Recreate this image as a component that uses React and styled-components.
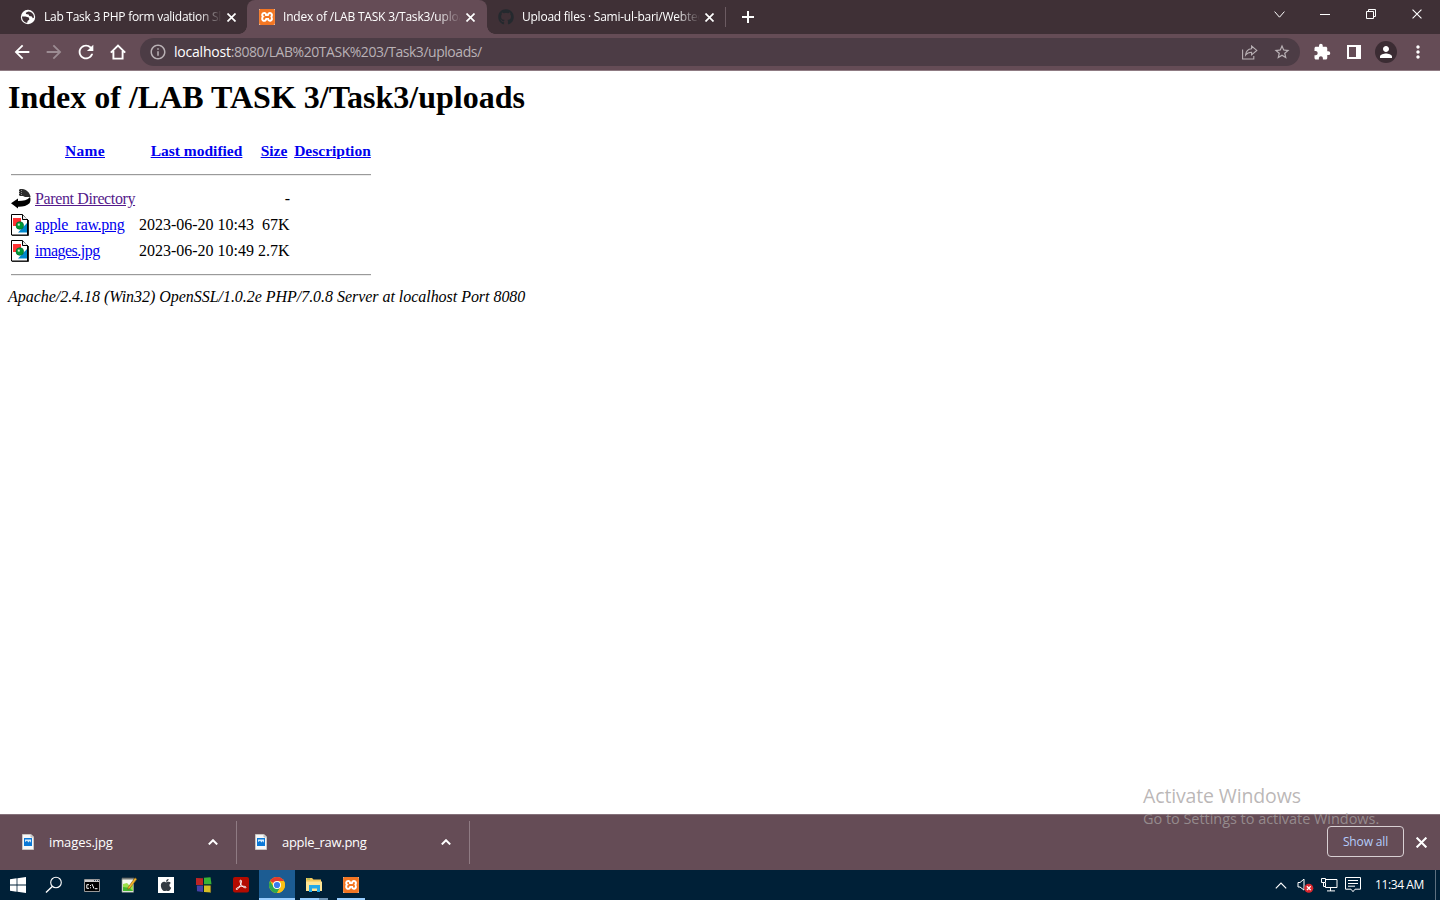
import React from 'react';
import styled, { createGlobalStyle } from 'styled-components';
import { MdArrowBack, MdArrowForward, MdRefresh, MdInfoOutline, MdStarBorder, MdExtension, MdPerson, MdMoreVert } from 'react-icons/md';
import { FaGithub, FaApple } from 'react-icons/fa';
import { SiXampp } from 'react-icons/si';

const Global = createGlobalStyle`
  * { box-sizing: border-box; }
  html, body { margin: 0; padding: 0; }
  body { width: 1440px; height: 900px; overflow: hidden; background: #fff; }
  svg { display: block; flex: none; }
`;

const Screen = styled.div`
  position: relative;
  width: 1440px;
  height: 900px;
  display: flex;
  flex-direction: column;
  font-family: 'Open Sans', 'Noto Sans', sans-serif;
  color: #fff;
`;

/* tab strip */
const TabStrip = styled.div`
  height: 34px;
  flex: none;
  display: flex;
  background: #3f3036;
  padding-left: 8px;
`;
const Tab = styled.div`
  position: relative;
  width: ${p => p.$width}px;
  height: 34px;
  display: flex;
  align-items: center;
  padding: 0 0 0 ${p => p.$left || 12}px;
  background: ${p => (p.$active ? '#654c56' : 'transparent')};
  border-radius: 8px 8px 0 0;
  &::before, &::after {
    content: '';
    display: ${p => (p.$active ? 'block' : 'none')};
    position: absolute;
    bottom: 0;
    width: 8px;
    height: 8px;
  }
  &::before { left: -8px; background: radial-gradient(circle at 0 0, transparent 7.5px, #654c56 8px); }
  &::after { right: -8px; background: radial-gradient(circle at 100% 0, transparent 7.5px, #654c56 8px); }
`;
const TabTitle = styled.div`
  width: 178px;
  margin: 0 5px 0 8px;
  overflow: hidden;
  white-space: nowrap;
  font-size: 12px;
  line-height: 16px;
  letter-spacing: ${p => p.$ls}px;
  mask-image: linear-gradient(90deg, #000 154px, transparent 178px);
`;
const TabDivider = styled.div`
  width: 1px;
  height: 20px;
  margin: 7px 16px 0 0;
  background: #6c5b62;
`;
const NewTab = styled.div`
  height: 34px;
  display: flex;
  align-items: center;
`;
const WindowButtons = styled.div`
  display: flex;
  height: 28px;
  margin-left: auto;
`;
const WindowButton = styled.div`
  width: 46px;
  display: flex;
  align-items: center;
  justify-content: center;
`;

/* toolbar */
const Toolbar = styled.div`
  height: 37px;
  flex: none;
  display: flex;
  align-items: center;
  background: #654c56;
  border-bottom: 1px solid #8f7b83;
  padding-left: 6px;
`;
const ToolButton = styled.div`
  width: 32px;
  height: 32px;
  display: flex;
  align-items: center;
  justify-content: center;
  color: ${p => (p.$dim ? '#9c8c93' : '#fff')};
`;
const Omnibox = styled.div`
  width: 1160px;
  height: 28px;
  margin: 0 6px;
  padding: 0 2px 0 9px;
  border-radius: 14px;
  background: #4c3c45;
  color: #b9b1b5;
  display: flex;
  align-items: center;
`;
const Url = styled.div`
  flex: 1;
  margin-left: 7px;
  font-size: 14px;
  line-height: 20px;
  white-space: nowrap;
  letter-spacing: -0.46px;
`;
const Host = styled.span`
  color: #fff;
  letter-spacing: -0.22px;
`;
const Avatar = styled.div`
  width: 22px;
  height: 22px;
  border-radius: 50%;
  background: #3b2c33;
  display: flex;
  align-items: center;
  justify-content: center;
`;

/* directory listing */
const Page = styled.main`
  height: 743px;
  flex: none;
  background: #fff;
  color: #000;
  padding: 8px;
  font-family: 'Liberation Serif', serif;
  font-size: 16px;
`;
const Heading = styled.h1`
  margin: 0 0 25px;
  font-size: 32px;
  line-height: 37px;
  font-weight: 700;
  white-space: nowrap;
`;
const Listing = styled.div`
  width: 360px;
  margin-left: 3px;
`;
const Row = styled.div`
  height: ${p => p.$height || 26}px;
  display: grid;
  grid-template-columns: 20px 100px 115px 32px 77px;
  column-gap: 4px;
  align-items: center;
  white-space: nowrap;
  font-size: ${p => (p.$head ? 15.5 : 16)}px;
  font-weight: ${p => (p.$head ? 700 : 400)};
`;
const HeadLink = styled.a`
  grid-column: ${p => p.$col};
  justify-self: center;
  color: #0000ee;
  text-decoration: underline;
  letter-spacing: ${p => p.$ls || 0}px;
`;
const FileLink = styled.a`
  color: ${p => (p.$visited ? '#551a8b' : '#0000ee')};
  text-decoration: underline;
  letter-spacing: ${p => p.$ls || 0}px;
`;
const Cell = styled.span`
  justify-self: end;
  padding-right: ${p => p.$inset || 0}px;
`;
const Rule = styled.div`
  height: 2px;
  border-top: 1px solid #9a9a9a;
  border-bottom: 1px solid #ececec;
  margin: ${p => p.$margin};
`;
const Signature = styled.address`
  line-height: 18px;
  font-style: italic;
  white-space: nowrap;
  letter-spacing: -0.035px;
`;

/* downloads */
const Shelf = styled.div`
  height: 56px;
  flex: none;
  display: flex;
  align-items: center;
  background: #654c56;
  border-top: 1px solid #85717a;
`;
const Download = styled.div`
  width: ${p => p.$width}px;
  height: 43px;
  display: flex;
  align-items: center;
  padding: 0 18px 2px ${p => p.$left}px;
  border-right: 1px solid #8f7b83;
`;
const FileName = styled.div`
  flex: 1;
  margin-left: 15px;
  font-size: 13px;
  line-height: 18px;
  letter-spacing: ${p => p.$ls}px;
`;
const ShowAll = styled.div`
  width: 77px;
  height: 31px;
  margin: 0 12px 2px auto;
  border: 1px solid #d8d0d3;
  border-radius: 4px;
  color: #b4cdfb;
  font-size: 12px;
  line-height: 29px;
  text-align: center;
  letter-spacing: -0.15px;
`;
const ShelfClose = styled.div`
  width: 24px;
`;

/* taskbar */
const Taskbar = styled.div`
  height: 30px;
  flex: none;
  display: flex;
  align-items: center;
  background: #002037;
`;
const TaskItem = styled.div`
  position: relative;
  width: ${p => p.$width || 37}px;
  height: 30px;
  display: flex;
  align-items: center;
  justify-content: center;
  background: ${p => (p.$active ? '#1c5c92' : 'transparent')};
`;
const Running = styled.i`
  position: absolute;
  bottom: 0;
  left: ${p => p.$left}px;
  width: ${p => p.$width}px;
  height: 2px;
  background: ${p => p.$color || '#99ceff'};
`;
const AppTile = styled.div`
  width: 16px;
  height: 16px;
  display: flex;
  align-items: center;
  justify-content: center;
  background: #fff;
  color: ${p => p.$color};
  border-radius: ${p => p.$radius || 0}px;
  overflow: hidden;
`;
const Tray = styled.div`
  display: flex;
  align-items: center;
  height: 30px;
  margin-left: auto;
`;
const TrayIcons = styled.div`
  display: flex;
  align-items: center;
  gap: 7px;
  margin-left: 10px;
`;
const Clock = styled.div`
  width: 50px;
  margin: 0 10px 1px 14px;
  font-size: 12px;
  line-height: 16px;
  white-space: nowrap;
  letter-spacing: -0.4px;
`;
const PeekEdge = styled.div`
  width: 5px;
  height: 30px;
  border-left: 1px solid #5d7080;
`;

const Watermark = styled.div`
  position: absolute;
  left: 1143px;
  top: 783px;
  color: rgba(165, 160, 160, 0.75);
  white-space: nowrap;
`;
const WatermarkTitle = styled.div`
  font-size: 19.5px;
  line-height: 26px;
  letter-spacing: -0.14px;
`;
const WatermarkText = styled.div`
  font-size: 14.5px;
  line-height: 20px;
  letter-spacing: -0.04px;
`;

const Cross = ({ size = 9, w = 1.7 }) => (
  <svg width={size} height={size} viewBox="0 0 9 9" stroke="#fff" strokeWidth={w}><path d="M.5.5l8 8M8.5.5l-8 8" /></svg>
);
const Globe = () => (
  <svg width="16" height="16" viewBox="0 0 16 16">
    <circle cx="8" cy="8" r="7.2" fill="#fff" />
    <path d="M2 7.4L5.4 7.4 8.8 8.6 9.4 10.6 7.6 12 7.2 13.8C4.4 13.6 2 11.2 2 7.4zM8.3 2.4L5.8 3.8 6 5 8.6 5.4 9.4 7 11.8 7.6 12.8 9.2 13.9 8.8C14.4 5.8 12.3 2.6 8.3 2.4z" fill="#3f3036" />
  </svg>
);
const Xampp = () => <AppTile $color="#f37623" $radius={1}><SiXampp size={16} /></AppTile>;
const HomeIcon = () => (
  <svg width="16" height="16" viewBox="0 0 16 16" fill="none" stroke="#fff" strokeWidth="1.9">
    <path d="M.8 8.6L8 1.6l7.2 7M3.4 7v7.6h9.2V7" />
  </svg>
);
const Chevron = ({ w = 10, h = 6, sw = 2, down }) => (
  <svg width={w} height={h} viewBox={`0 0 ${w} ${h}`} fill="none" stroke="#fff" strokeWidth={sw}>
    <path d={down ? `M.6 .6L${w / 2} ${h - 0.8}L${w - 0.6} .6` : `M.8 ${h - 0.6}L${w / 2} 1.2L${w - 0.8} ${h - 0.6}`} />
  </svg>
);
const BackIcon = () => (
  <svg width="20" height="20" viewBox="0 0 20 20">
    <path d="M8 0h3.5C15 .5 19 3.500 19.600 8H14L12 7H8z" fill="#2c2c2c" />
    <path d="M8.500 0v7M10.500 1v5" stroke="#888" strokeDasharray="1 1" />
    <path d="M0 14.300L7 9.500v2.500c5.500 0 9.500-1 12-4 .8 2 .6 4.500-.5 6.200-2.500 2.600-6.500 3.600-11.500 3.500V19.500z" fill="#000" />
  </svg>
);
const ImageIcon = () => (
  <svg width="20" height="22" viewBox="0 0 20 22">
    <path d="M.5.5h11l5 5v15.500H.5z" fill="#fff" stroke="#000" />
    <path d="M17.500 6v15.500H1" fill="none" stroke="#222" />
    <path d="M11.500.7v4.800H17" fill="#eee" stroke="#000" />
    <path d="M2 4h8v8H2z" fill="#f33" />
    <path d="M16 9v9.500H7z" fill="#08c" />
    <circle cx="8.800" cy="11.500" r="3.800" fill="#093" stroke="#063" strokeWidth=".7" />
    <path d="M6.800 9.600h2v2h-2z" fill="#cfeed6" />
  </svg>
);
const DownloadIcon = () => (
  <svg width="12" height="16" viewBox="0 0 12 16">
    <path d="M.5.5H9L11.500 3v12.500H.5z" fill="#f7f7f7" stroke="#c9c5c2" />
    <path d="M9 .5V3h2.500" fill="#ddd" stroke="#aaa" strokeWidth=".7" />
    <path d="M2 4h8v8H2z" fill="#0a78d7" />
    <path d="M3 5.500h6v3.200L7.800 7 6.500 8.500 5 6.800 3 8z" fill="#d5ebfb" />
  </svg>
);
const ShareIcon = () => (
  <svg width="16" height="15" viewBox="0 0 16 15" fill="none" stroke="#b9b1b5" strokeWidth="1.1">
    <path d="M.6 4.500v9.500h11.200v-3M9.600 3.700V1l5.200 4.400-5.200 4.400V7.200C6.700 7.200 5 8 3.600 10c.3-3.400 2.400-6 6-6.300z" />
  </svg>
);
const WindowsLogo = () => (
  <svg width="16" height="16" viewBox="0 0 16 16" fill="#fff">
    <path d="M0 2.200L6.600 1.300V7.600H0zM7.400 1.200L16 0v7.600H7.400zM0 8.400h6.600v6.300L0 13.800zM7.400 8.400H16V16l-8.600-1.200z" />
  </svg>
);
const SearchIcon = () => (
  <svg width="18" height="18" viewBox="0 0 18 18" fill="none" stroke="#fff" strokeWidth="1.1">
    <circle cx="11" cy="6.500" r="5.300" /><path d="M7.200 10.400L1 16.600" strokeWidth="1.4" />
  </svg>
);
const ConsoleIcon = () => (
  <svg width="16" height="13" viewBox="0 0 16 13">
    <path d="M.5.5h15v12H.5z" fill="#000" stroke="#999" />
    <path d="M1 1h14v2H1z" fill="#ccc" />
    <path d="M10 1.500h1M12 1.500h1M14 1.500h1" stroke="#345" />
    <path d="M5 5.700H2.800v3.600H5M6.500 6v1M6.500 8.300v1M8 5l2 4.600M11 9.700h2.500" fill="none" stroke="#fff" />
  </svg>
);
const NotepadIcon = () => (
  <svg width="16" height="16" viewBox="0 0 16 16">
    <path d="M1 1.500h11.500v13.700H1z" fill="#f7faf0" stroke="#8b948a" strokeWidth=".7" />
    <path d="M2 0v3M4 0v3M6 0v3M8 0v3M10 0v3M12 0v3" stroke="#555" strokeWidth=".8" />
    <path d="M2 7l4-1 3 3 3-1v6H2z" fill="#9be14a" />
    <path d="M2 10l7 1 3 3H2z" fill="#45b72d" />
    <path d="M14 .8l1.800 1.400-7 9.300-2 .8.300-2z" fill="#f6b526" stroke="#77551a" strokeWidth=".6" />
  </svg>
);
const CubesIcon = () => (
  <svg width="16" height="16" viewBox="0 0 16 16">
    <path d="M0 1l7 .2V8H0z" fill="#bd2424" /><path d="M8 .8L14.500.2l1 7H8z" fill="#39b335" />
    <path d="M.8 8.500H7V15l-6-.7z" fill="#4540a6" /><path d="M8 8.400h7v7.100L8 15z" fill="#d7bf24" />
    <path d="M7 1.200l1-.4M7 8h1M15 8v7" stroke="#222" strokeWidth=".8" />
  </svg>
);
const AcrobatIcon = () => (
  <svg width="16" height="16" viewBox="0 0 16 16">
    <rect width="16" height="15.500" rx="2" fill="#b30b00" />
    <path d="M7.500 3c1.500-.2 1 2.900-.3 5.400C6 10.900 4.300 13 3.300 12.400c-1-.9 2.200-2.700 5.200-3 3-.4 4.700.2 4.500 1-.3 1-2.500.1-3.900-1.400C7.500 7.300 6.300 3.400 7.500 3z" fill="none" stroke="#fff" strokeWidth="1" />
  </svg>
);
const ChromeIcon = () => (
  <svg width="16" height="16" viewBox="0 0 16 16">
    <circle cx="8" cy="8" r="8" fill="#fbc116" />
    <path d="M8 8L1.070 4A8 8 0 0 1 14.930 4z" fill="#e33b2e" />
    <path d="M1.070 4A8 8 0 0 0 8 16l3.400-6L4.600 10z" fill="#2da94f" />
    <path d="M8 4h6.930A8 8 0 0 1 8 16l3.500-6z" fill="#fbc116" />
    <circle cx="8" cy="8" r="4" fill="#fff" /><circle cx="8" cy="8" r="3.100" fill="#3a7cec" />
  </svg>
);
const FolderIcon = () => (
  <svg width="16" height="14" viewBox="0 0 16 14">
    <path d="M0 0h6l1.500 1.500H15V13H0z" fill="#f5c85b" /><path d="M1 1h3" stroke="#84b45c" />
    <path d="M0 3.500h16V13H0z" fill="#ffe595" />
    <path d="M3 14V7h11v7h-3v-3.500H6V14z" fill="#25a9e8" />
  </svg>
);
const SpeakerIcon = () => (
  <svg width="17" height="15" viewBox="0 0 17 15">
    <path d="M1 4.500h2l4-3.400v11L3 9H1z" fill="none" stroke="#fff" />
    <circle cx="11.800" cy="10.200" r="4.500" fill="#d9272e" />
    <path d="M9.900 8.300l3.800 3.800M13.700 8.300l-3.800 3.800" stroke="#fff" strokeWidth="1.3" />
  </svg>
);
const NetworkIcon = () => (
  <svg width="17" height="14" viewBox="0 0 17 14" fill="none" stroke="#fff">
    <path d="M5 1.500h11v8H4.500V5M9.500 10v3M6 12.900h8M.5.5h4v4h-4zM2.500 4.500v4H4" />
  </svg>
);
const MessageIcon = () => (
  <svg width="16" height="16" viewBox="0 0 16 16" fill="none" stroke="#fff">
    <path d="M.5.5h15v11.700H10L8 14.700l-2-2.500H.5zM3 3.500h10M3 6.500h10M3 9.200h7" />
  </svg>
);

const files = [
  { name: 'apple_raw.png', date: '2023-06-20 10:43', size: '67K', ls: -0.33 },
  { name: 'images.jpg', date: '2023-06-20 10:49', size: '2.7K', ls: -0.5 },
];

export default function App() {
  return (
    <Screen>
      <Global />
      <TabStrip>
        <Tab $width={239}><Globe /><TabTitle $ls={-0.27}>Lab Task 3 PHP form validation Sl</TabTitle><Cross /></Tab>
        <Tab $width={240} $active><Xampp /><TabTitle $ls={-0.2}>Index of /LAB TASK 3/Task3/uploads</TabTitle><Cross /></Tab>
        <Tab $width={238} $left={11}><FaGithub size={16} color="#24292e" /><TabTitle $ls={-0.24}>Upload files · Sami-ul-bari/Webtech</TabTitle><Cross /></Tab>
        <TabDivider />
        <NewTab><svg width="12" height="12" viewBox="0 0 12 12" stroke="#fff" strokeWidth="2"><path d="M6 0v12M0 6h12" /></svg></NewTab>
        <WindowButtons>
          <WindowButton><Chevron w={11} h={7} sw={1} down /></WindowButton>
          <WindowButton><svg width="10" height="1"><path d="M0 .5h10" stroke="#fff" /></svg></WindowButton>
          <WindowButton><svg width="10" height="10" fill="none" stroke="#fff"><path d="M.5 2.500h7v7h-7zM2.500 2.500v-2h7v7h-2" /></svg></WindowButton>
          <WindowButton><Cross size={10} w={1} /></WindowButton>
        </WindowButtons>
      </TabStrip>
      <Toolbar>
        <ToolButton><MdArrowBack size={22} /></ToolButton>
        <ToolButton $dim><MdArrowForward size={22} /></ToolButton>
        <ToolButton><MdRefresh size={22} /></ToolButton>
        <ToolButton><HomeIcon /></ToolButton>
        <Omnibox>
          <MdInfoOutline size={18} />
          <Url><Host>localhost</Host>:8080/LAB%20TASK%203/Task3/uploads/</Url>
          <ToolButton $dim><ShareIcon /></ToolButton>
          <ToolButton><MdStarBorder size={18} color="#b9b1b5" /></ToolButton>
        </Omnibox>
        <ToolButton><MdExtension size={18} /></ToolButton>
        <ToolButton><svg width="14" height="14" viewBox="0 0 14 14"><path d="M0 0h14v14H0zM2 2v10h7V2z" fill="#fff" fillRule="evenodd" /></svg></ToolButton>
        <ToolButton><Avatar><MdPerson size={18} /></Avatar></ToolButton>
        <ToolButton><MdMoreVert size={20} /></ToolButton>
      </Toolbar>
      <Page>
        <Heading>Index of /LAB TASK 3/Task3/uploads</Heading>
        <Listing>
          <Row $head $height={20}>
            <HeadLink $col={2} $ls={0.3}>Name</HeadLink>
            <HeadLink $col={3}>Last modified</HeadLink>
            <HeadLink $col={4}>Size</HeadLink>
            <HeadLink $col={5}>Description</HeadLink>
          </Row>
          <Rule $margin="13px 0 10px" />
          <Row><BackIcon /><FileLink $visited $ls={-0.38}>Parent Directory</FileLink><span /><Cell>-</Cell></Row>
          {files.map(f => (
            <Row key={f.name}><ImageIcon /><FileLink $ls={f.ls}>{f.name}</FileLink><Cell>{f.date}</Cell><Cell $inset={0.5}>{f.size}</Cell></Row>
          ))}
          <Rule $margin="10px 0 12px" />
        </Listing>
        <Signature>Apache/2.4.18 (Win32) OpenSSL/1.0.2e PHP/7.0.8 Server at localhost Port 8080</Signature>
      </Page>
      <Shelf>
        <Download $width={237} $left={22}><DownloadIcon /><FileName $ls={-0.1}>images.jpg</FileName><Chevron /></Download>
        <Download $width={233} $left={18}><DownloadIcon /><FileName $ls={-0.3}>apple_raw.png</FileName><Chevron /></Download>
        <ShowAll>Show all</ShowAll>
        <ShelfClose><Cross size={11} w={1.7} /></ShelfClose>
      </Shelf>
      <Taskbar>
        <TaskItem $width={36}><WindowsLogo /></TaskItem>
        <TaskItem $width={36}><SearchIcon /></TaskItem>
        <TaskItem $width={40}><ConsoleIcon /></TaskItem>
        <TaskItem $width={34}><NotepadIcon /></TaskItem>
        <TaskItem $width={40}><AppTile $color="#333b42"><FaApple size={14} /></AppTile></TaskItem>
        <TaskItem $width={36}><CubesIcon /></TaskItem>
        <TaskItem><AcrobatIcon /></TaskItem>
        <TaskItem $active $width={36}><ChromeIcon /><Running $left={0} $width={36} /></TaskItem>
        <TaskItem $width={38}><FolderIcon /><Running $left={5} $width={19} /><Running $left={24} $width={9} $color="#7095b5" /></TaskItem>
        <TaskItem $width={36}><Xampp /><Running $left={4} $width={28} /></TaskItem>
        <Tray>
          <Chevron w={12} h={7} sw={1.2} />
          <TrayIcons>
            <SpeakerIcon />
            <NetworkIcon />
            <MessageIcon />
          </TrayIcons>
          <Clock>11:34 AM</Clock>
          <PeekEdge />
        </Tray>
      </Taskbar>
      <Watermark>
        <WatermarkTitle>Activate Windows</WatermarkTitle>
        <WatermarkText>Go to Settings to activate Windows.</WatermarkText>
      </Watermark>
    </Screen>
  );
}
